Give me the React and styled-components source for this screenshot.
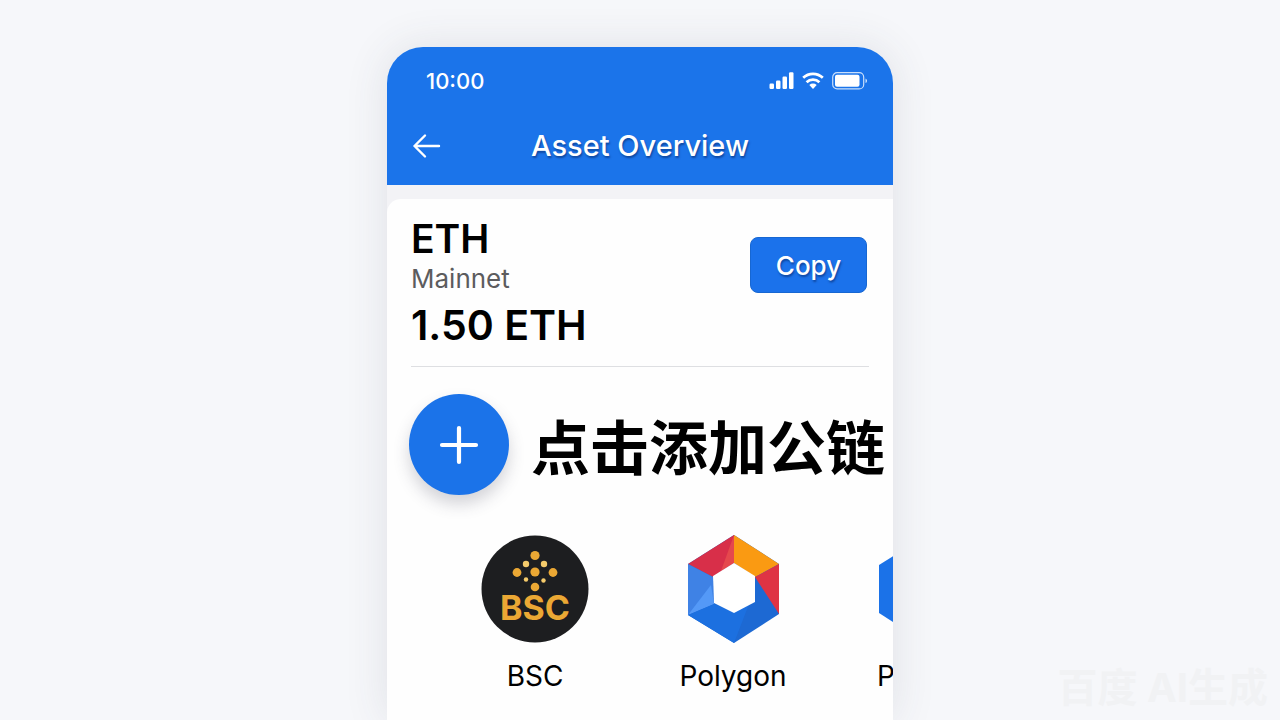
import styled, { createGlobalStyle } from 'styled-components';

const GlobalStyle = createGlobalStyle`
  * {
    box-sizing: border-box;
  }
  body {
    margin: 0;
    background: #f6f7fa;
    color: #000;
    font-family: Inter, 'Noto Sans CJK SC', sans-serif;
  }
`;

const Page = styled.div`
  position: relative;
  display: flex;
  flex-direction: column;
  align-items: center;
  height: 100vh;
  padding-top: 47px;
  overflow: hidden;
`;

const Phone = styled.main`
  display: flex;
  flex: 1;
  flex-direction: column;
  width: 100%;
  max-width: 506px;
  min-height: 0;
  overflow: hidden;
  background: #f3f3f6;
  border-radius: 36px 36px 0 0;
  box-shadow: 0 0 44px rgba(60, 65, 80, 0.12);
`;

const Header = styled.header`
  padding-bottom: 13px;
  background: #1b74ea;
  color: #fff;
`;

const StatusBar = styled.div`
  display: flex;
  align-items: center;
  justify-content: space-between;
  height: 67px;
  padding: 0 25px 0 39px;
  font-size: 22px;
  font-weight: 500;
  line-height: 28px;
`;

const StatusIcons = styled.div`
  display: flex;
  align-items: center;
  gap: 8px;
`;

const TitleBar = styled.div`
  display: grid;
  grid-template-columns: 80px 1fr 80px;
  align-items: center;
  height: 52px;
  margin-top: 6px;
`;

const BackButton = styled.button`
  display: flex;
  padding: 0 0 0 24px;
  border: 0;
  background: none;
  color: inherit;
  cursor: pointer;
`;

const Title = styled.h1`
  margin: 0;
  font-size: 29px;
  font-weight: 500;
  line-height: 40px;
  text-align: center;
  text-shadow: 1px 2px 2px rgba(0, 30, 90, 0.5);
`;

const Card = styled.section`
  flex: 1;
  margin-top: 14px;
  background: #fefefe;
  border-radius: 14px 0 0 0;
`;

const Asset = styled.div`
  display: flex;
  align-items: flex-start;
  justify-content: space-between;
  height: 168px;
  margin: 0 24px;
  padding-top: 16px;
  border-bottom: 1px solid #dedfe2;
`;

const Symbol = styled.h2`
  margin: 0;
  font-size: 39px;
  font-weight: 600;
  line-height: 48px;
`;

const Network = styled.p`
  margin: 0;
  color: #5c5c5e;
  font-size: 26px;
  line-height: 32px;
`;

const Balance = styled.p`
  margin: 4px 0 0;
  font-size: 41px;
  font-weight: 600;
  line-height: 52px;
`;

const CopyButton = styled.button`
  width: 117px;
  height: 56px;
  margin: 22px 2px 0 0;
  border: 1px solid #1767d2;
  border-radius: 8px;
  background: #1b72eb;
  color: #fff;
  font-family: inherit;
  font-size: 26px;
  font-weight: 500;
  text-shadow: 1px 2px 2px rgba(0, 30, 90, 0.5);
  cursor: pointer;
`;

const AddChain = styled.div`
  display: flex;
  align-items: center;
  gap: 22px;
  padding: 27px 0 0 22px;
`;

const AddButton = styled.button`
  display: flex;
  flex: none;
  align-items: center;
  justify-content: center;
  width: 100px;
  height: 101px;
  padding: 0;
  border: 0;
  border-radius: 50%;
  background: #1b73e9;
  color: #fff;
  box-shadow: 0 9px 16px rgba(60, 60, 80, 0.22);
  cursor: pointer;
`;

const AddLabel = styled.label`
  padding-top: 8px;
  font-size: 59px;
  font-weight: 700;
  line-height: 72px;
  white-space: nowrap;
  cursor: pointer;
`;

const ChainList = styled.ul`
  display: flex;
  gap: 90px;
  margin: 0;
  padding: 40px 0 0 94px;
  overflow: hidden;
  list-style: none;
`;

const Chain = styled.li`
  display: flex;
  flex: none;
  flex-direction: column;
  align-items: ${(props) => props.$align || 'center'};
  gap: 17px;
  width: 108px;
  font-size: 28px;
  line-height: 32px;
`;

const Watermark = styled.div`
  position: absolute;
  right: 12px;
  bottom: 8px;
  color: #f1f2f4;
  font-size: 40px;
  font-weight: 700;
  line-height: 48px;
`;

function SignalIcon() {
  return (
    <svg width="25" height="18" viewBox="0 0 25 18" fill="#fff" aria-hidden="true">
      <rect x="0.500" y="11.500" width="4.500" height="5.500" rx="1.2" />
      <rect x="7" y="8.500" width="4.500" height="8.500" rx="1.2" />
      <rect x="13.500" y="4.500" width="4.500" height="12.500" rx="1.2" />
      <rect x="20" y="0.300" width="4.500" height="16.700" rx="1.2" />
    </svg>
  );
}

function WifiIcon() {
  return (
    <svg width="22" height="18" viewBox="0 0 22 18" aria-hidden="true">
      <g fill="none" stroke="#fff" strokeWidth="2.700">
        <path d="M1.200 5.800a14 14 0 0 1 19.600 0" />
        <path d="M4.600 10.200a9 9 0 0 1 12.800 0" />
      </g>
      <path d="M7.300 13a5.400 5.400 0 0 1 7.400 0L11 17z" fill="#fff" />
    </svg>
  );
}

function BatteryIcon() {
  return (
    <svg width="36" height="18" viewBox="0 0 36 18" aria-hidden="true">
      <rect x="0.700" y="0.700" width="31" height="16.200" rx="4.500" fill="none" stroke="#c9dffb" strokeWidth="1.200" />
      <rect x="3" y="2.800" width="24.500" height="12" rx="2" fill="#fff" />
      <path d="M33.500 6.500c2 .8 2 3.800 0 4.600z" fill="#c9dffb" />
    </svg>
  );
}

function BackIcon() {
  return (
    <svg width="30" height="28" viewBox="0 0 30 28" fill="none" stroke="#fff" strokeWidth="2.400" strokeLinecap="round" strokeLinejoin="round" aria-hidden="true">
      <path d="M14 3.500L3.500 14L14 24.500M3.500 14H28" />
    </svg>
  );
}

function PlusIcon() {
  return (
    <svg width="40" height="40" viewBox="0 0 40 40" stroke="#fff" strokeWidth="4.200" strokeLinecap="round" aria-hidden="true">
      <path d="M20 3V37M3 20H37" />
    </svg>
  );
}

function BscLogo() {
  return (
    <svg width="108" height="108" viewBox="0 0 108 108" fill="#eba834" aria-hidden="true">
      <circle cx="54" cy="54" r="53.500" fill="#1d1e20" />
      <circle cx="54" cy="20.500" r="4.600" />
      <circle cx="36" cy="37.500" r="4.400" />
      <circle cx="72" cy="37.500" r="4.400" />
      <circle cx="54" cy="37" r="4.600" />
      <circle cx="54" cy="52" r="4.300" />
      <g fill="#f5cb6b">
        <circle cx="45" cy="29" r="3.200" />
        <circle cx="63" cy="29" r="3.200" />
        <circle cx="45" cy="44.500" r="2.200" />
        <circle cx="62.500" cy="45.500" r="2.200" />
      </g>
      <text x="54" y="85" fontSize="34" fontWeight="700" textAnchor="middle">BSC</text>
    </svg>
  );
}

function PolygonLogo() {
  return (
    <svg width="93" height="108" viewBox="0 0 93 108" aria-hidden="true">
      <path d="M47 0L92 29V79L47 108L1 80V29Z" fill="#1d69d3" />
      <path d="M47 0L92 29L68 42L47 28Z" fill="#fa9a12" />
      <path d="M47 0V28L26 42L1 29Z" fill="#d82f49" />
      <path d="M47 0V28L34 36Z" fill="#e5484d" />
      <path d="M92 29V79L68 42Z" fill="#df3344" />
      <path d="M1 29L26 42L27 69L1 80Z" fill="#3f82e5" />
      <path d="M24 50L27 69L1 80Z" fill="#5499f7" />
      <path d="M27 69L47 77L62 69L47 108L1 80Z" fill="#1c70e0" />
      <path d="M47 28L68 41V67L47 78L27 68L26 41Z" fill="#fff" />
    </svg>
  );
}

function BlueHexLogo() {
  return (
    <svg width="93" height="108" viewBox="0 0 93 108" aria-hidden="true">
      <path d="M2 30L47 2L92 30V78L47 107L2 78Z" fill="#1b72e8" />
    </svg>
  );
}

const chains = [
  { name: 'BSC', Logo: BscLogo },
  { name: 'Polygon', Logo: PolygonLogo },
  { name: 'P', Logo: BlueHexLogo, align: 'flex-start' },
];

export default function App() {
  return (
    <Page>
      <GlobalStyle />
      <Phone>
        <Header>
          <StatusBar>
            <span>10:00</span>
            <StatusIcons>
              <SignalIcon />
              <WifiIcon />
              <BatteryIcon />
            </StatusIcons>
          </StatusBar>
          <TitleBar>
            <BackButton type="button" aria-label="Back">
              <BackIcon />
            </BackButton>
            <Title>Asset Overview</Title>
          </TitleBar>
        </Header>
        <Card>
          <Asset>
            <div>
              <Symbol>ETH</Symbol>
              <Network>Mainnet</Network>
              <Balance>1.50 ETH</Balance>
            </div>
            <CopyButton type="button">Copy</CopyButton>
          </Asset>
          <AddChain>
            <AddButton type="button" id="add-chain">
              <PlusIcon />
            </AddButton>
            <AddLabel htmlFor="add-chain">点击添加公链</AddLabel>
          </AddChain>
          <ChainList>
            {chains.map(({ name, Logo, align }) => (
              <Chain key={name} $align={align}>
                <Logo />
                <span>{name}</span>
              </Chain>
            ))}
          </ChainList>
        </Card>
      </Phone>
      <Watermark>百度 AI生成</Watermark>
    </Page>
  );
}
